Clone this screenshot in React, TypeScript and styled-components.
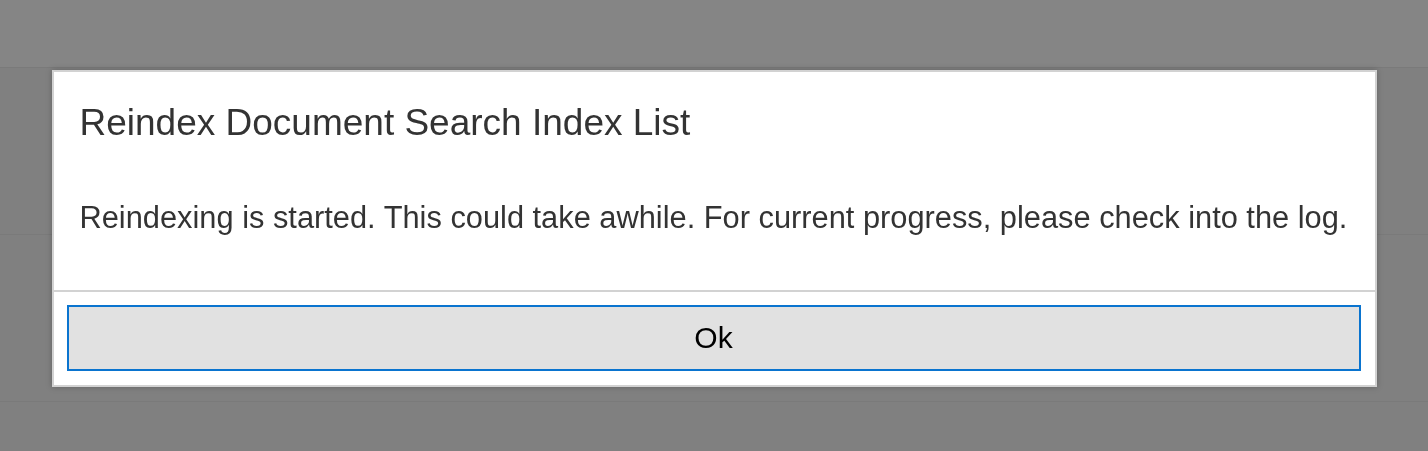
import styled, { createGlobalStyle } from "styled-components";

const GlobalStyle = createGlobalStyle`
  html, body {
    margin: 0;
    padding: 0;
    height: 100%;
    background: #808080;
    font-family: "Liberation Sans", Arial, sans-serif;
  }
  #root {
    height: 100%;
  }
`;

const Page = styled.div`
  display: flex;
  flex-direction: column;
  min-height: 451px;
  background: #808080;
`;

const PageHeader = styled.div`
  height: 67px;
  background: #858585;
  border-bottom: 1px solid #7a7a7a;
`;

const PageRow = styled.div`
  height: 166px;
  border-bottom: 1px solid #7a7a7a;
`;

const Overlay = styled.div`
  position: fixed;
  inset: 0;
  display: flex;
  justify-content: center;
  align-items: flex-start;
  padding-top: 70px;
`;

const Dialog = styled.div`
  width: 1325px;
  box-sizing: border-box;
  background: #fff;
  border: 2px solid #d2d2d2;
  box-shadow: 0 0 6px rgba(0, 0, 0, 0.25);
  display: flex;
  flex-direction: column;
`;

const Title = styled.h2`
  margin: 0;
  padding: 31px 26px 0;
  font-size: 37px;
  font-weight: 400;
  color: #333;
  line-height: 40px;
`;

const Message = styled.p`
  margin: 0;
  padding: 59px 26px 56px;
  font-size: 30.8px;
  color: #333;
  line-height: 32px;
  white-space: nowrap;
`;

const Footer = styled.div`
  border-top: 2px solid #d2d2d2;
  padding: 13px 14px 14px 13px;
`;

const OkButton = styled.button`
  width: 100%;
  height: 66px;
  box-sizing: border-box;
  background: #e1e1e1;
  border: 2px solid #0a74cf;
  font-family: "Liberation Sans", Arial, sans-serif;
  font-size: 30px;
  color: #000;
  cursor: pointer;
`;

const App = () => {
    return (
        <>
            <GlobalStyle />
            <Page>
                <PageHeader />
                <PageRow />
                <PageRow />
            </Page>
            <Overlay>
                <Dialog>
                    <Title>Reindex Document Search Index List</Title>
                    <Message>
                        Reindexing is started. This could take awhile. For current progress, please check into the log.
                    </Message>
                    <Footer>
                        <OkButton>Ok</OkButton>
                    </Footer>
                </Dialog>
            </Overlay>
        </>
    );
};

export default App;
